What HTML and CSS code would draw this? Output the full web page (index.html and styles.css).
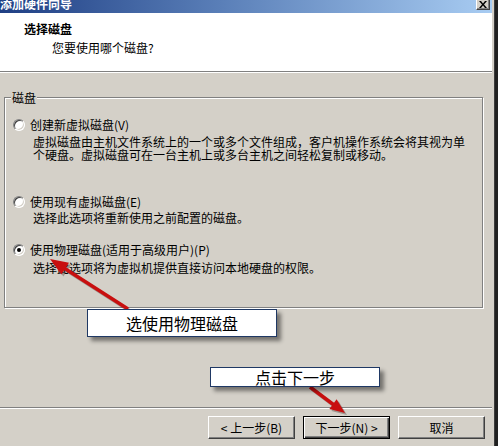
FILE: index.html
```html
<!DOCTYPE html>
<html lang="zh-CN">
<head>
<meta charset="utf-8">
<title>添加硬件向导</title>
<link rel="stylesheet" href="styles.css">
</head>
<body>
<div class="page">
  <div class="dialog">
    <div class="titlebar">
      <span class="title">添加硬件向导</span>
      <span class="close">
        <svg width="8" height="7" viewBox="0 0 8 7"><path d="M0 0h2l2 2.5L6 0h2L5 3.5 8 7H6L4 4.5 2 7H0l3-3.5z" fill="#000"/></svg>
      </span>
    </div>
    <div class="header">
      <div class="h-title">选择磁盘</div>
      <div class="h-sub">您要使用哪个磁盘?</div>
    </div>
    <div class="content">
      <div class="group">
        <div class="legend">磁盘</div>
        <div class="option opt1">
          <span class="radio"></span>
          <span class="label">创建新虚拟磁盘(V)</span>
        </div>
        <div class="desc">虚拟磁盘由主机文件系统上的一个或多个文件组成，客户机操作系统会将其视为单<br>个硬盘。虚拟磁盘可在一台主机上或多台主机之间轻松复制或移动。</div>
        <div class="option opt2">
          <span class="radio"></span>
          <span class="label">使用现有虚拟磁盘(E)</span>
        </div>
        <div class="desc d2">选择此选项将重新使用之前配置的磁盘。</div>
        <div class="option opt3">
          <span class="radio checked"></span>
          <span class="label">使用物理磁盘(适用于高级用户)(P)</span>
        </div>
        <div class="desc d3">选择此选项将为虚拟机提供直接访问本地硬盘的权限。</div>
      </div>
    </div>
    <div class="footer">
      <button class="btn">&lt; 上一步(B)</button>
      <button class="btn default">下一步(N) &gt;</button>
      <button class="btn">取消</button>
    </div>
  </div>
  <div class="edge"></div>

  <svg class="arrows" width="498" height="446" viewBox="0 0 498 446">
    <g opacity="0.35" transform="translate(2 2)">
      <line x1="128" y1="309" x2="64" y2="268" stroke="#3a2a28" stroke-width="3.5"/>
      <polygon points="50,259 69,262.8 61.4,274.6" fill="#3a2a28"/>
      <line x1="310" y1="387" x2="334" y2="405" stroke="#3a2a28" stroke-width="3.5"/>
      <polygon points="345,413 329.4,408.9 336.6,399.3" fill="#3a2a28"/>
    </g>
    <line x1="128" y1="309" x2="64" y2="268" stroke="#c80f0f" stroke-width="3.5"/>
    <polygon points="50,259 69,262.8 61.4,274.6" fill="#c80f0f"/>
    <line x1="310" y1="387" x2="334" y2="405" stroke="#c80f0f" stroke-width="3.5"/>
    <polygon points="345,413 329.4,408.9 336.6,399.3" fill="#c80f0f"/>
  </svg>

  <div class="callout c1">选使用物理磁盘</div>
  <div class="callout c2">点击下一步</div>
</div>
</body>
</html>
```

FILE: styles.css
```css
* { box-sizing: border-box; }

html, body {
  margin: 0;
  padding: 0;
}

body {
  font-family: "Noto Sans CJK SC", "Liberation Sans", sans-serif;
  font-size: 12px;
  line-height: 13px;
  color: #000;
  background: #1e1e1e;
}

.page {
  position: relative;
  width: 498px;
  height: 446px;
  overflow: hidden;
  display: flex;
}

.dialog {
  width: 494px;
  height: 446px;
  display: flex;
  flex-direction: column;
  background: #d4d0c8;
  border-right: 2px solid #d4d0c8;
}

.edge {
  flex: 1;
  background: #202020;
  border-left: 1px solid #3c3c3c;
}

.titlebar {
  height: 13px;
  display: flex;
  align-items: flex-start;
  justify-content: space-between;
  background: linear-gradient(to right, #1f3f84 0%, #5a7fb8 45%, #a8ccf2 100%);
  overflow: hidden;
}

.title {
  color: #fff;
  font-weight: bold;
  font-size: 12px;
  line-height: 13px;
  margin-top: -3px;
  white-space: nowrap;
}

.close {
  width: 14px;
  height: 14px;
  margin-top: -4px;
  margin-right: 2px;
  background: #d4d0c8;
  border: 1px solid;
  border-color: #fff #404040 #404040 #fff;
  box-shadow: inset -1px -1px #808080;
  display: flex;
  align-items: center;
  justify-content: center;
  padding-top: 3px;
}

.header {
  height: 59px;
  background: #fff;
  padding: 9px 0 0 24px;
  border-bottom: 1px solid #808080;
  box-shadow: 0 1px 0 #fff;
}

.h-title {
  font-weight: bold;
  line-height: 13px;
}

.h-sub {
  margin-top: 6px;
  margin-left: 28px;
  line-height: 13px;
}

.content {
  flex: 1;
  padding: 25px 0 0 4px;
}

.group {
  width: 479px;
  height: 211px;
  border: 1px solid #808080;
  box-shadow: inset 1px 1px 0 #fff, 1px 1px 0 #fff;
  padding: 0 0 0 8px;
}

.legend {
  display: block;
  width: max-content;
  margin: -7px 0 0 -2px;
  padding: 0 1px;
  background: #d4d0c8;
  line-height: 13px;
}

.option {
  display: flex;
  align-items: center;
  height: 13px;
  line-height: 13px;
}

.opt1 { margin-top: 14px; }
.opt2 { margin-top: 34px; }
.opt3 { margin-top: 19px; }

.radio {
  position: relative;
  width: 12px;
  height: 12px;
  border-radius: 50%;
  background: #fff;
  border: 1px solid;
  border-color: #808080 #fff #fff #808080;
  box-shadow: inset 1px 1px 0 #404040, inset -1px -1px 0 #d4d0c8;
  flex: none;
}

.radio.checked::after {
  content: "";
  position: absolute;
  left: 3px;
  top: 3px;
  width: 4px;
  height: 4px;
  border-radius: 50%;
  background: #000;
}

.label {
  margin-left: 5px;
  white-space: nowrap;
}

.desc {
  margin: 4px 0 0 20px;
  line-height: 13px;
  white-space: nowrap;
}

.d2 { margin-top: 3px; }
.d3 { margin-top: 5px; }

.footer {
  height: 39px;
  border-top: 1px solid #808080;
  box-shadow: inset 0 1px 0 #fff;
  display: flex;
  justify-content: flex-end;
  align-items: flex-start;
  gap: 8px;
  padding: 8px 7px 0 0;
}

.btn {
  width: 87px;
  height: 23px;
  padding: 0;
  font-family: "Noto Sans CJK SC", "Liberation Sans", sans-serif;
  font-size: 12px;
  line-height: 13px;
  color: #000;
  background: #d4d0c8;
  border: 1px solid;
  border-color: #fff #404040 #404040 #fff;
  box-shadow: inset -1px -1px 0 #808080;
}

.btn.default {
  border: 1px solid #000;
  box-shadow: inset 1px 1px 0 #fff, inset -1px -1px 0 #404040, inset -2px -2px 0 #808080;
}

.arrows {
  position: absolute;
  left: 0;
  top: 0;
  pointer-events: none;
}

.callout {
  position: absolute;
  background: #fff;
  border: 1px solid #1f3864;
  box-shadow: 4px 4px 4px rgba(0, 0, 0, 0.45);
  font-size: 16px;
  text-align: center;
  white-space: nowrap;
}

.c1 {
  left: 87px;
  top: 309px;
  width: 190px;
  height: 28px;
  line-height: 26px;
}

.c2 {
  left: 210px;
  top: 367px;
  width: 170px;
  height: 20px;
  line-height: 18px;
}
```
